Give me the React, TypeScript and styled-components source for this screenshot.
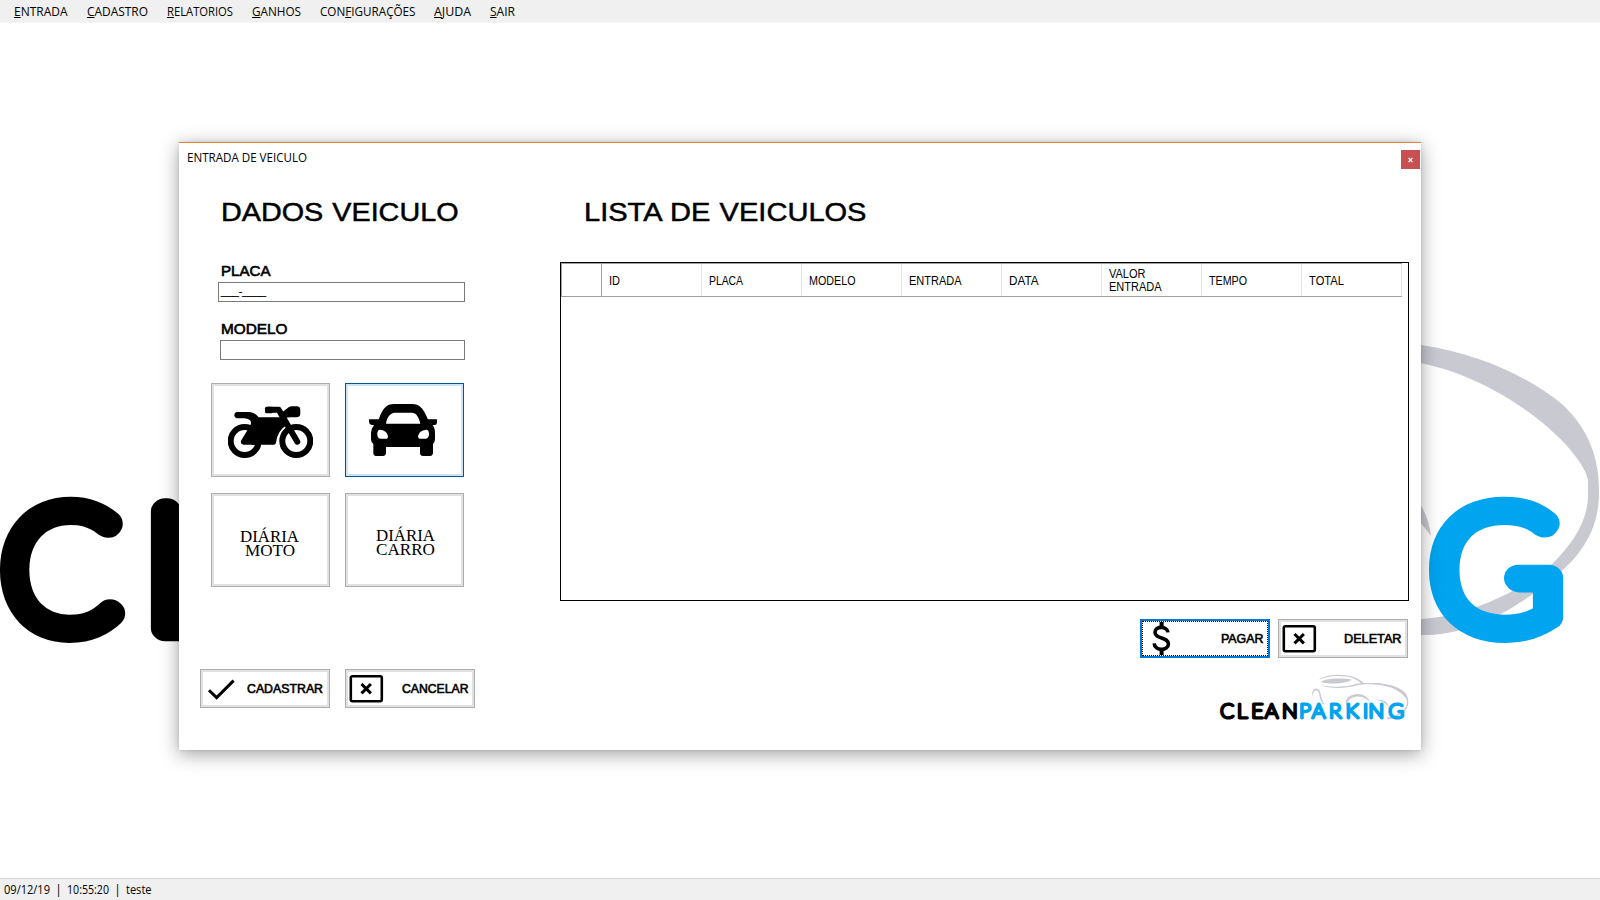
import React, { useLayoutEffect, useRef } from "react";
import styled, { createGlobalStyle } from "styled-components";

const GlobalStyle = createGlobalStyle`
  *, *::before, *::after { box-sizing: border-box; }
  html, body { margin: 0; padding: 0; background: #fff; overflow: hidden; }
  body { font-family: "Open Sans", "Noto Sans", sans-serif; color: #000; }
`;

const FitBox = styled.span<{ $w: number }>`
  display: block;
  flex: none;
  width: ${(p) => p.$w}px;
  white-space: nowrap;
`;
const FitInner = styled.span`
  display: inline-block;
  transform-origin: 0 50%;
`;

/* Stretches a run of text horizontally so it fills the given width. */
function FitText({ w, children }: { w: number; children: React.ReactNode }) {
  const ref = useRef<HTMLSpanElement>(null);
  useLayoutEffect(() => {
    const el = ref.current;
    if (!el) return;
    el.style.transform = "none";
    const natural = el.getBoundingClientRect().width;
    if (natural) el.style.transform = `scaleX(${w / natural})`;
  }, [w]);
  return (
    <FitBox $w={w}>
      <FitInner ref={ref}>{children}</FitInner>
    </FitBox>
  );
}

const Screen = styled.div`
  position: relative;
  display: flex;
  flex-direction: column;
  width: 1600px;
  height: 900px;
  overflow: hidden;
  background: #fff;
`;
const MenuBar = styled.nav`
  display: flex;
  height: 23px;
  padding-left: 14px;
  gap: 19px;
  background: #f0f0f0;
  border-bottom: 1px solid #f5f6fa;
  font-size: 12px;
  line-height: 23px;
  u { text-underline-offset: 1px; text-decoration-thickness: 1px; text-decoration-skip-ink: none; }
`;
const Desktop = styled.main`
  flex: 1;
  display: flex;
  flex-direction: column;
  padding-top: 227px;
`;
const StatusBar = styled.footer`
  display: flex;
  height: 22px;
  padding-left: 4px;
  background: #f0f0f0;
  border-top: 1px solid #d7d7d7;
  font-size: 12px;
  line-height: 21px;
`;
const Divider = styled.span`
  width: 17px;
  text-align: center;
`;

const Dialog = styled.section`
  position: absolute;
  left: 179px;
  top: 142px;
  width: 1242px;
  height: 608px;
  background: #fff;
  border-top: 1px solid #e8803f;
  box-shadow: 0 4px 18px rgba(0, 0, 0, 0.38), 0 0 3px rgba(0, 0, 0, 0.12);
`;
const TitleBar = styled.header`
  display: flex;
  justify-content: space-between;
  height: 34px;
  padding: 7px 1px 0 7.5px;
  font-size: 12px;
  line-height: 16px;
`;
const CloseButton = styled.button`
  display: flex;
  align-items: center;
  justify-content: center;
  width: 19px;
  height: 19px;
  padding: 0;
  border: 0;
  background: #c75050;
`;
const DialogBody = styled.div`
  display: flex;
`;
const FormColumn = styled.div`
  width: 381px;
`;
const ListColumn = styled.div`
  width: 849px;
`;
const Heading = styled.h1<{ $indent: number }>`
  margin: 20px 0 0;
  padding-left: ${(p) => p.$indent}px;
  font: 400 26.5px/30px "Liberation Sans", Arial, sans-serif;
  -webkit-text-stroke: 0.5px #000;
  word-spacing: 1px;
`;
const Field = styled.div<{ $gap: number }>`
  margin-top: ${(p) => p.$gap}px;
`;
const Label = styled.label`
  display: block;
  padding-left: 42px;
  font: 400 14.5px/16px "Liberation Sans", Arial, sans-serif;
  -webkit-text-stroke: 0.6px #000;
`;
const InputBox = styled.div<{ $left: number }>`
  width: ${(p) => 286 - p.$left}px;
  height: 20px;
  margin: 3px 0 0 ${(p) => p.$left}px;
  padding-left: 2px;
  border: 1px solid #7a7a7a;
  background: #fff;
  font: 400 11px/17px "Liberation Sans", Arial, sans-serif;
  -webkit-text-stroke: 0.3px #000;
`;

const TileGrid = styled.div`
  display: grid;
  grid-template-columns: 119px 119px;
  gap: 16px 15px;
  margin: 23px 0 0 32px;
`;
const Tile = styled.button<{ $active?: boolean }>`
  display: flex;
  align-items: center;
  justify-content: center;
  height: 94px;
  padding: 0;
  background: #fff;
  border: 1px solid ${(p) => (p.$active ? "#00559b" : "#adadad")};
  box-shadow: inset 0 0 0 2px ${(p) => (p.$active ? "#cce4f7" : "#e1e1e1")};
  color: #000;
`;
const TileLabel = styled.span<{ $top: number; $right: number }>`
  display: flex;
  flex-direction: column;
  align-items: center;
  padding: ${(p) => p.$top}px ${(p) => p.$right}px 0 0;
  font: 400 16.4px/14px "Liberation Serif", "Times New Roman", serif;
`;
const ButtonRow = styled.div<{ $top: number; $left: number; $gap: number }>`
  display: flex;
  gap: ${(p) => p.$gap}px;
  margin: ${(p) => p.$top}px 0 0 ${(p) => p.$left}px;
`;
const ActionButton = styled.button<{ $focused?: boolean }>`
  display: flex;
  align-items: center;
  justify-content: space-between;
  width: 130px;
  height: 39px;
  background: #fff;
  border: ${(p) => (p.$focused ? "2px solid #0078d7" : "1px solid #adadad")};
  padding: ${(p) => (p.$focused ? "0 5px 0 8.5px" : "0 6px 0 2.5px")};
  box-shadow: ${(p) => (p.$focused ? "none" : "inset 0 0 0 2px #e1e1e1")};
  outline: ${(p) => (p.$focused ? "1px dotted #000" : "none")};
  outline-offset: -3px;
  color: #000;
  font: 400 12.5px/16px "Liberation Sans", Arial, sans-serif;
  -webkit-text-stroke: 0.6px #000;
  text-align: left;
`;

const TableFrame = styled.div`
  height: 339px;
  margin-top: 35px;
  border: 1px solid #000;
`;
const TableHead = styled.div`
  display: grid;
  grid-template-columns: 40px repeat(8, 100px);
  width: 841px;
  height: 34px;
  border: solid #a0a0a0;
  border-width: 1px 0 1px 1px;
`;
const RowHeaderCell = styled.div`
  border-right: 1px solid #a0a0a0;
`;
const HeadCell = styled.div`
  display: flex;
  flex-direction: column;
  justify-content: center;
  padding: 2px 0 0 7px;
  border-right: 1px solid #e5e5e5;
  font: 400 12px/13px "Liberation Sans", Arial, sans-serif;
`;
const LogoSlot = styled.div`
  display: flex;
  justify-content: flex-end;
  margin-top: 15px;
  padding-right: 1px;
`;
const LogoSvg = styled.svg`
  display: block;
  overflow: visible;
`;

function Logo({ width, height }: { width: number; height: number }) {
  return (
    <LogoSvg width={width} height={height} viewBox="0 250 1600 400" preserveAspectRatio="none">
      <g fill="#c9c9d2">
        <path d="M1190 340 C1270 331 1345 331 1421 345 C1480 354 1527 376 1562 404 C1590 430 1599 460 1599 490 C1600 535 1575 562 1548 582 C1505 618 1460 636 1421 635 L1421 619 C1465 617 1520 592 1550 566 C1574 543 1588 520 1588 495 L1588 480 C1582 450 1510 382 1421 363 C1345 342 1270 336 1190 340Z" />
        <path d="M1320 476 C1375 466 1424 480 1431 536 C1405 500 1375 480 1320 476Z" />
        <g transform="matrix(2.83 0 0 2.77 -85 184)">
          <path d="M327 45 C345 28 400 24 435 37 C450 43 458 50 464 56 L456 57 C442 44 430 38 415 35 C375 29 345 35 327 45Z" />
          <path d="M333 51 C345 40 395 38 426 44 C410 55 365 60 333 51Z" />
          <path d="M331 61 C370 69 415 64 440 56 C460 52 500 54 532 59 L532 62 C500 57 465 56 445 60 C415 69 365 74 331 61Z" />
          <path d="M308 96 C303 75 315 66 325 73 C335 80 331 102 346 122 C325 107 332 86 323 77 C314 72 309 82 308 96Z" />
          <path d="M407 115 C407 82 470 73 482 115 C469 92 425 83 411 115 Q424 135 443 148 Q411 138 407 115Z" />
        </g>
      </g>
      <g
        fontFamily="Lato, 'Liberation Sans', sans-serif"
        fontWeight={100}
        fontSize={165.5}
        strokeWidth={26.5}
        strokeLinejoin="round"
        strokeLinecap="round"
        transform="scale(1.07 1)"
      >
        <text y="628.2" x="2" fill="#000" stroke="#000" transform="scale(0.965 1)">C</text>
        <text y="628.2" x="135 249 357 493" fill="#000" stroke="#000">LEAN</text>
        <text y="628.2" x="629 731 865 999 1135 1178 1337.5" fill="#00a4ef" stroke="#00a4ef">PARKING</text>
      </g>
    </LogoSvg>
  );
}

const MotorcycleIcon = () => (
  <svg width="85.3" height="52" viewBox="84 107 256 156" style={{ marginTop: 3 }}>
    <g fill="none" stroke="#000" strokeLinecap="round" strokeLinejoin="round">
      <circle cx="134" cy="212" r="42" strokeWidth="18" />
      <circle cx="289" cy="212" r="42" strokeWidth="18" />
      <path d="M204 118 H236 L292 214" strokeWidth="18" />
    </g>
    <rect x="195" y="109" width="24" height="20" rx="5" />
    <path d="M247 126 L266 111 Q270 108 276 108 H292 Q302 109 301 121 V132 Q300 141 289 141 H271 Q262 141 257 143Z" />
    <path d="M110 125 H148 Q166 127 176 141 H248 L262 163 Q232 180 228 217 Q227 223 221 223 H130 Q120 220 123 211 L150 167 Q156 158 150 150 Q145 145 134 144 H112 Q103 143 103 134 Q103 126 110 125Z" />
    <path d="M163 180 L184 224 H155Z" />
  </svg>
);

const CarIcon = () => (
  <svg width="68" height="52" viewBox="507 102 204 156" style={{ marginRight: 3 }}>
    <path
      fillRule="evenodd"
      d="M537 146 C543 128 552 110 567 104 Q574 102 582 102 H638 Q650 102 658 108 C670 117 677 132 683 146 L684 148 H711 V158 Q710 165 704 165 H698 Q706 176 705 192 V208 Q705 216 699 222 V249 Q698 258 690 258 H669 Q660 257 660 249 V231 H558 V249 Q557 258 549 258 H528 Q520 257 520 249 V222 Q513 216 513 208 V188 Q514 176 522 165 H515 Q508 164 507 156 V148 H535Z
      M558 161 H661 C657 142 650 130 637 128 H583 C569 130 561 143 558 161Z
      M540 179 C529 179 529 205 541 206 H560 C569 204 563 180 540 179Z
      M679 179 C655 180 649 204 659 206 H678 C690 205 690 179 679 179Z"
    />
  </svg>
);

const CheckIcon = () => (
  <svg width="34" height="33" viewBox="0 0 34 33" fill="none" stroke="#000" strokeWidth="3">
    <path d="M5 18.2 L12.6 25.6 L29.6 8.6" />
  </svg>
);
const BoxXIcon = () => (
  <svg width="36" height="33" viewBox="0 0 36 33" fill="none" stroke="#000">
    <rect x="1.8" y="4.2" width="31" height="25" rx="1.6" strokeWidth="2.6" />
    <path d="M12.5 12 L21.9 21.4 M21.9 12 L12.5 21.4" strokeWidth="3" />
  </svg>
);
const DollarIcon = () => (
  <svg width="20" height="33" viewBox="0 0 20 33" fill="none" stroke="#000">
    <path d="M17 10.4 C16.4 3.8 4 3.6 4 10.2 C4 17.6 17.4 14.4 17.4 22 C17.4 29.4 3.6 29 3.2 21.4" strokeWidth="3.6" />
    <path d="M10.6 0 V5 M10.6 27.5 V33" strokeWidth="4" />
  </svg>
);
const CloseIcon = () => (
  <svg width="5" height="6" viewBox="0 0 5 6" stroke="#fff" strokeWidth="1.3">
    <path d="M0.6 0.8 L4.4 5.2 M4.4 0.8 L0.6 5.2" />
  </svg>
);

const menuItems: [string, string, string, number][] = [
  ["", "E", "NTRADA", 53.5],
  ["", "C", "ADASTRO", 61],
  ["", "R", "ELATORIOS", 66],
  ["", "G", "ANHOS", 49],
  ["CON", "F", "IGURAÇÕES", 95.5],
  ["", "A", "JUDA", 37],
  ["", "S", "AIR", 25],
];

const columns: [string, number][][] = [
  [["ID", 11]],
  [["PLACA", 34]],
  [["MODELO", 46.5]],
  [["ENTRADA", 52.5]],
  [["DATA", 29.5]],
  [["VALOR", 36.5], ["ENTRADA", 52.5]],
  [["TEMPO", 38]],
  [["TOTAL", 35]],
];

export default function App() {
  return (
    <Screen>
      <GlobalStyle />
      <MenuBar>
        {menuItems.map(([pre, key, post, w]) => (
          <FitText key={post} w={w}>
            {pre}
            <u>{key}</u>
            {post}
          </FitText>
        ))}
      </MenuBar>
      <Desktop>
        <Logo width={1600} height={400} />
      </Desktop>
      <StatusBar>
        <FitText w={46}>09/12/19</FitText>
        <Divider>|</Divider>
        <FitText w={42}>10:55:20</FitText>
        <Divider>|</Divider>
        <FitText w={25.5}>teste</FitText>
      </StatusBar>

      <Dialog>
        <TitleBar>
          <FitText w={120}>ENTRADA DE VEICULO</FitText>
          <CloseButton aria-label="Fechar">
            <CloseIcon />
          </CloseButton>
        </TitleBar>
        <DialogBody>
          <FormColumn>
            <Heading $indent={42}>
              <FitText w={237.5}>DADOS VEICULO</FitText>
            </Heading>
            <Field $gap={36}>
              <Label>
                <FitText w={49.5}>PLACA</FitText>
              </Label>
              <InputBox $left={39}>
                <FitText w={45}>___-____</FitText>
              </InputBox>
            </Field>
            <Field $gap={19}>
              <Label>
                <FitText w={66.5}>MODELO</FitText>
              </Label>
              <InputBox $left={41} />
            </Field>
            <TileGrid>
              <Tile>
                <MotorcycleIcon />
              </Tile>
              <Tile $active>
                <CarIcon />
              </Tile>
              <Tile>
                <TileLabel $top={8} $right={3}>
                  <FitText w={59}>DIÁRIA</FitText>
                  <FitText w={50}>MOTO</FitText>
                </TileLabel>
              </Tile>
              <Tile>
                <TileLabel $top={6} $right={0}>
                  <FitText w={59}>DIÁRIA</FitText>
                  <FitText w={59}>CARRO</FitText>
                </TileLabel>
              </Tile>
            </TileGrid>
            <ButtonRow $top={82} $left={21} $gap={15}>
              <ActionButton>
                <CheckIcon />
                <FitText w={76}>CADASTRAR</FitText>
              </ActionButton>
              <ActionButton>
                <BoxXIcon />
                <FitText w={66.5}>CANCELAR</FitText>
              </ActionButton>
            </ButtonRow>
          </FormColumn>
          <ListColumn>
            <Heading $indent={24}>
              <FitText w={282.5}>LISTA DE VEICULOS</FitText>
            </Heading>
            <TableFrame>
              <TableHead>
                <RowHeaderCell />
                {columns.map((lines, i) => (
                  <HeadCell key={i}>
                    {lines.map(([t, w]) => (
                      <FitText key={t} w={w}>
                        {t}
                      </FitText>
                    ))}
                  </HeadCell>
                ))}
              </TableHead>
            </TableFrame>
            <ButtonRow $top={18} $left={580} $gap={8}>
              <ActionButton $focused>
                <DollarIcon />
                <FitText w={42.5}>PAGAR</FitText>
              </ActionButton>
              <ActionButton>
                <BoxXIcon />
                <FitText w={57.5}>DELETAR</FitText>
              </ActionButton>
            </ButtonRow>
            <LogoSlot>
              <Logo width={188.4} height={48} />
            </LogoSlot>
          </ListColumn>
        </DialogBody>
      </Dialog>
    </Screen>
  );
}
